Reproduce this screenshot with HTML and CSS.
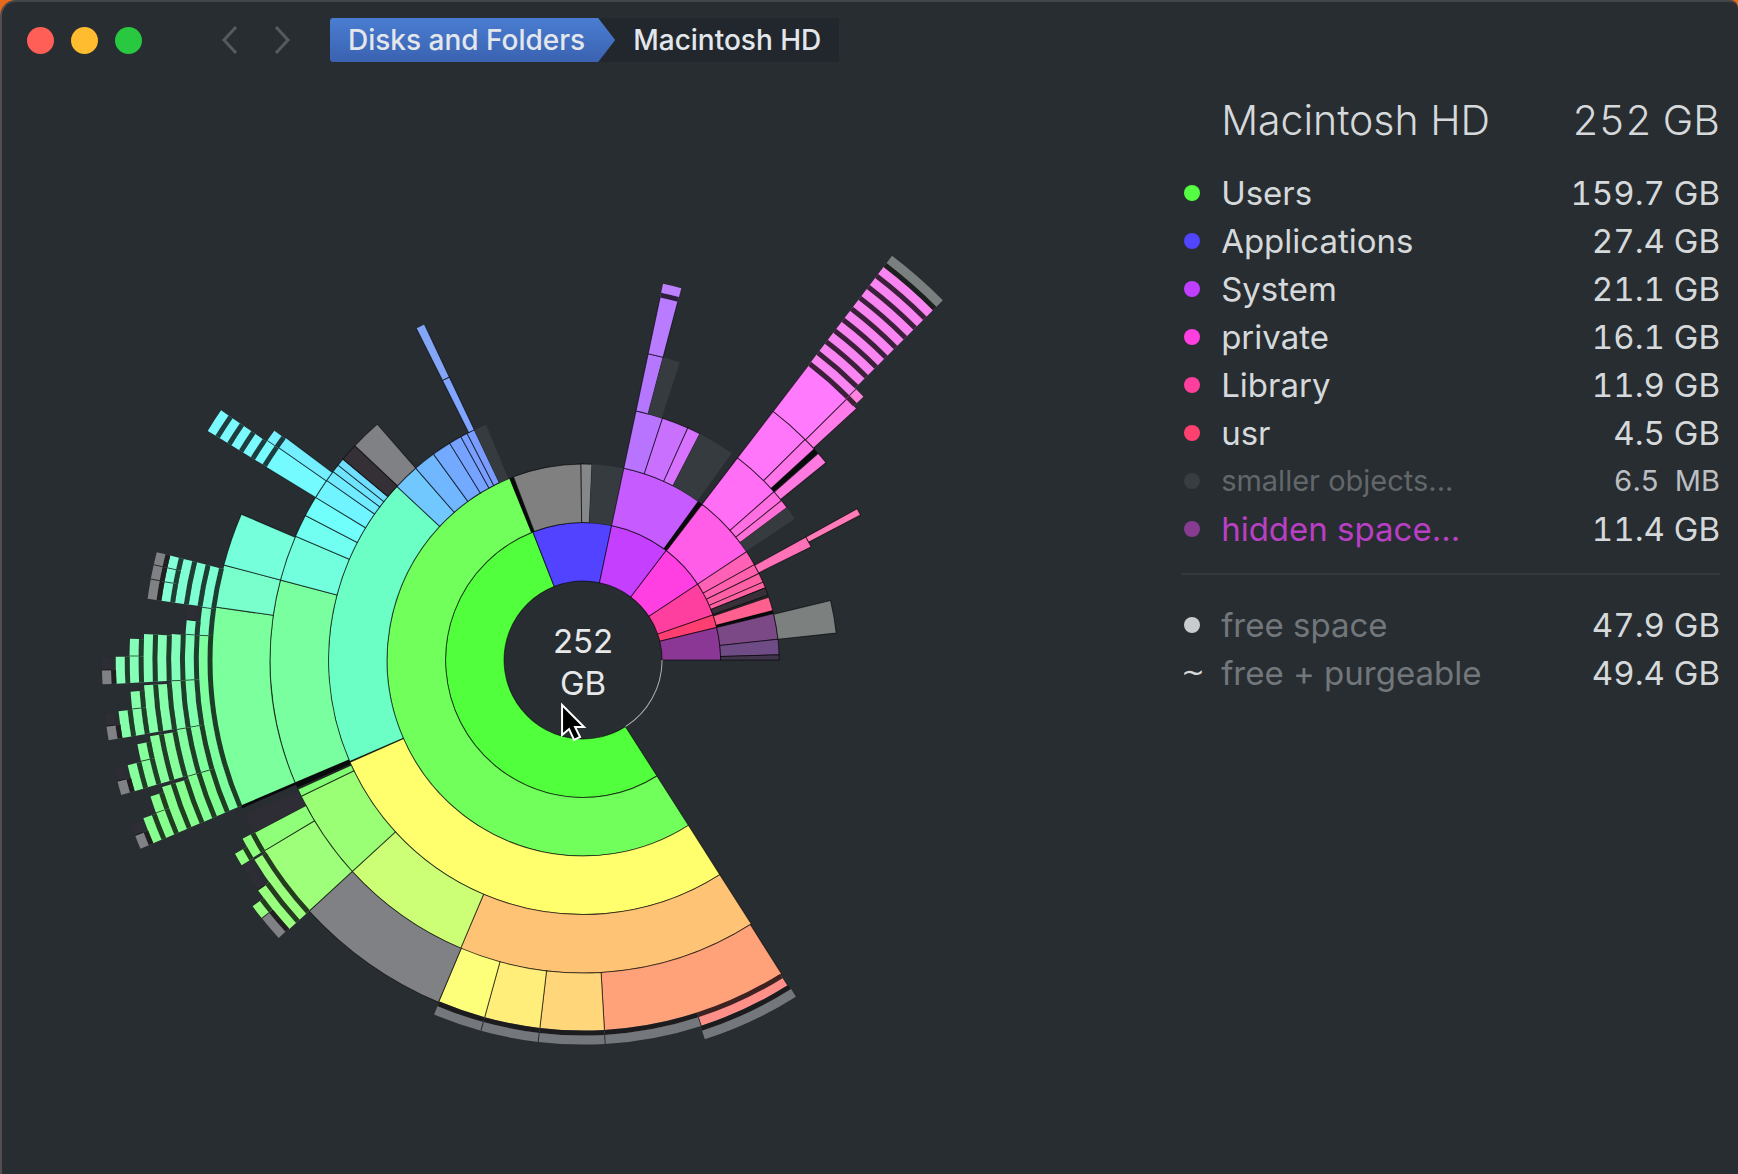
FILE: index.html
```
<!DOCTYPE html>
<html lang="en">

<head>
    <meta charset="UTF-8">
    <title>Macintosh HD</title>
    <link rel="stylesheet" href="styles.css">
</head>

<body>
    <div class="window">
        <header class="toolbar">
            <div class="lights">
                <button class="light close" aria-label="Close"></button>
                <button class="light minimize" aria-label="Minimize"></button>
                <button class="light maximize" aria-label="Maximize"></button>
            </div>
            <div class="arrows">
                <button class="arrow" aria-label="Back">
                    <svg width="16" height="28" viewBox="0 0 16 28"><path d="M14 1 L2 14 L14 27" /></svg>
                </button>
                <button class="arrow" aria-label="Forward">
                    <svg width="16" height="28" viewBox="0 0 16 28"><path d="M2 1 L14 14 L2 27" /></svg>
                </button>
            </div>
            <nav class="path">
                <a class="crumb root" href="#">Disks and Folders</a>
                <a class="crumb" href="#">Macintosh HD</a>
            </nav>
        </header>

        <main class="content">
            <svg class="chart" viewBox="-581 -581 1163 1094" role="img" aria-label="Disk usage">
                <g id="slices"></g>
                <path id="free-arc" class="free-arc" />
                <text class="total" x="0" y="-7">252</text>
                <text class="total" x="0" y="35">GB</text>
                <path class="cursor" d="M-21 45 V75 L-14 69 L-9 80 L-3 77 L-8 67 L1 67 Z" />
            </svg>

            <aside class="sidebar">
                <table class="list">
                    <thead>
                        <tr>
                            <td></td>
                            <th>Macintosh HD</th>
                            <th class="size">252 GB</th>
                        </tr>
                    </thead>
                    <tbody>
                        <tr>
                            <td><span class="dot users"></span></td>
                            <td>Users</td>
                            <td class="size">159.7 GB</td>
                        </tr>
                        <tr>
                            <td><span class="dot applications"></span></td>
                            <td>Applications</td>
                            <td class="size">27.4 GB</td>
                        </tr>
                        <tr>
                            <td><span class="dot system"></span></td>
                            <td>System</td>
                            <td class="size">21.1 GB</td>
                        </tr>
                        <tr>
                            <td><span class="dot private"></span></td>
                            <td>private</td>
                            <td class="size">16.1 GB</td>
                        </tr>
                        <tr>
                            <td><span class="dot library"></span></td>
                            <td>Library</td>
                            <td class="size">11.9 GB</td>
                        </tr>
                        <tr>
                            <td><span class="dot usr"></span></td>
                            <td>usr</td>
                            <td class="size">4.5 GB</td>
                        </tr>
                        <tr class="smaller">
                            <td><span class="dot"></span></td>
                            <td>smaller objects...</td>
                            <td class="size">6.5 &nbsp;MB</td>
                        </tr>
                        <tr class="hidden-space">
                            <td><span class="dot"></span></td>
                            <td>hidden space...</td>
                            <td class="size">11.4 GB</td>
                        </tr>
                    </tbody>
                </table>
                <hr>
                <table class="list free">
                    <tbody>
                        <tr>
                            <td><span class="dot"></span></td>
                            <td>free space</td>
                            <td class="size">47.9 GB</td>
                        </tr>
                        <tr>
                            <td><span class="tilde">~</span></td>
                            <td>free + purgeable</td>
                            <td class="size">49.4 GB</td>
                        </tr>
                    </tbody>
                </table>
            </aside>
        </main>
    </div>

    <script src="chart.js"></script>
</body>

</html>
```
FILE: styles.css
```
body {
    margin: 0;
    background: #e8681c;
    color: #d6d9db;
    font-family: Inter, "Liberation Sans", sans-serif;
}

.window {
    box-sizing: border-box;
    min-height: 100vh;
    display: flex;
    flex-direction: column;
    background: #282d31;
    border-top: 2px solid #41474b;
    border-left: 2px solid #584d4e;
    border-radius: 16px 8px 0 0;
}

/* Toolbar */
.toolbar {
    display: flex;
    align-items: center;
    height: 76px;
    padding-left: 25px;
}

.lights {
    display: flex;
    gap: 17px;
}

.light {
    width: 27px;
    height: 27px;
    padding: 0;
    border: none;
    border-radius: 50%;
}

.close {
    background: #ff5f57;
}

.minimize {
    background: #febc2e;
}

.maximize {
    background: #28c840;
}

.arrows {
    display: flex;
    gap: 36px;
    margin-left: 80px;
}

.arrow {
    display: flex;
    padding: 0;
    border: none;
    background: none;
}

.arrow path {
    fill: none;
    stroke: #555b5f;
    stroke-width: 3;
}

.path {
    display: flex;
    margin-left: 40px;
    background: #22272d;
    border-radius: 3px;
}

.crumb {
    padding: 0 18px;
    color: #e3e7ec;
    font-size: 28px;
    font-weight: 500;
    line-height: 44px;
    text-decoration: none;
}

.crumb.root {
    padding-right: 30px;
    background: linear-gradient(#4a7dd2, #3a62b0);
    border-radius: 3px;
    clip-path: polygon(0 0, calc(100% - 17px) 0, 100% 50%, calc(100% - 17px) 100%, 0 100%);
}

/* Content */
.content {
    flex: 1;
    display: flex;
}

.chart {
    flex: 1;
    min-width: 0;
}

.slice {
    stroke: rgba(0, 0, 0, 0.6);
    stroke-width: 1;
}

.shade {
    fill: rgba(0, 0, 0, 0.76);
}

.free-arc {
    fill: none;
    stroke: #aeb1b3;
    stroke-width: 1;
}

.total {
    fill: #e6e8ea;
    font-size: 33px;
    text-anchor: middle;
}

.cursor {
    fill: #000;
    stroke: #fff;
    stroke-width: 2;
}

.sidebar {
    box-sizing: border-box;
    width: 33%;
    padding: 11px 18px 0 16px;
}

.list {
    width: 100%;
    border-collapse: collapse;
    font-size: 33px;
}

.list td,
.list th {
    height: 48px;
    padding: 0;
    line-height: 48px;
    text-align: left;
    white-space: nowrap;
}

.list th {
    height: 62px;
    padding-bottom: 18px;
    font-size: 41px;
    font-weight: 300;
}

.list td:first-child {
    width: 40px;
}

.list .size {
    text-align: right;
    font-variant-numeric: tabular-nums;
}

.dot {
    display: block;
    width: 16px;
    height: 16px;
    margin-left: 3px;
    border-radius: 50%;
}

.users {
    background: #55ff42;
}

.applications {
    background: #5145ff;
}

.system {
    background: #c03fff;
}

.private {
    background: #ff3fe0;
}

.library {
    background: #ff3f9e;
}

.usr {
    background: #ff4170;
}

.smaller td {
    font-size: 29px;
    color: #62676b;
}

.smaller td.size {
    color: #bcbfc2;
}

.smaller .dot {
    background: #383d41;
}

.hidden-space td:nth-child(2) {
    color: #b93fc4;
}

.hidden-space .dot {
    background: #873c92;
}

hr {
    height: 2px;
    margin: 20px 0 26px;
    border: none;
    background: #33383c;
}

.free td:nth-child(2) {
    color: #72777b;
}

.free .dot {
    background: #c9ccce;
}

.tilde {
    display: block;
    font-family: "DejaVu Sans", sans-serif;
    font-size: 28px;
}
```
FILE: chart.js
```
const SVG = 'http://www.w3.org/2000/svg';
const group = document.getElementById('slices');

const HOLE = 79;        // radius of the empty centre
const RING = 58.5;      // width of a normal ring
const THIN = 9;         // width of a collapsed ring
const THIN_STEP = 13.8;

const GRAY = '#808184';
const DARK = '#353b3e';
const DUSK = '#2e2d36';

// rings 1-5 are full width, everything deeper is collapsed
function radii(level) {
    if (level <= 5) {
        return [HOLE + RING * (level - 1), HOLE + RING * level];
    }
    const inner = 375.5 + THIN_STEP * (level - 6);
    return [inner, inner + THIN];
}

// degrees run clockwise from the top
function point(r, deg) {
    const a = deg * Math.PI / 180;
    return (r * Math.sin(a)).toFixed(2) + ' ' + (-r * Math.cos(a)).toFixed(2);
}

function sector(r0, r1, from, to) {
    const large = to - from > 180 ? 1 : 0;
    return `M${point(r0, from)} L${point(r1, from)} A${r1} ${r1} 0 ${large} 1 ${point(r1, to)} ` +
        `L${point(r0, to)} A${r0} ${r0} 0 ${large} 0 ${point(r0, from)} Z`;
}

function draw(d, className, fill) {
    const path = document.createElementNS(SVG, 'path');
    path.setAttribute('d', d);
    if (className) path.setAttribute('class', className);
    if (fill) path.setAttribute('fill', fill);
    group.appendChild(path);
}

// parts: angle, color, angle, color, ... angle
function ring(level, ...parts) {
    const [r0, r1] = radii(level);
    for (let i = 0; i + 2 < parts.length; i += 2) {
        const from = parts[i];
        const color = parts[i + 1];
        const to = parts[i + 2];
        const faint = color === DARK || color === DUSK;
        if (level > 5 && !faint) {
            draw(sector(r0 - 5, r0, from, to), '', color);
            draw(sector(r0 - 5, r0, from, to), 'shade');
        }
        draw(sector(r0, r1, from, to), faint || level > 5 ? '' : 'slice', color);
        if (level > 5 && i > 0) {
            draw(`M${point(r0, from)} L${point(r1, from)}`, 'slice');
        }
    }
}

function shade(level, from, to) {
    const [r0, r1] = radii(level);
    draw(sector(r0, r1, from, to), 'shade');
}

// top level folders
ring(1, 147.5, '#52ff3d', 338.6, '#5143ff', 372, '#c53fff', 397.2, '#ff3fe2', 416.5,
    '#ff3f9f', 430.9, '#ff3f72', 436.3, '#8b3795', 450);

// Users
ring(2, 147.5, '#70ff5b', 338);
ring(3, 147.5, '#ffff6d', 246.5, '#6bffc5', 313, '#71c8ff', 318.9, '#71b7ff', 324, '#73aaff', 328.4,
    '#76a3ff', 331.3, '#789eff', 332.9, '#7a9cff', 334.7, DARK, 337.6);
ring(4, 147.5, '#ffc376', 203, '#ccff76', 227.5, '#9aff75', 244.2, '#82ff75', 245.6);
ring(4, 246.9, '#79ffa0', 284.8, '#72ffdd', 293.3, '#70fff0', 297.5, '#70fffa', 301.3, '#70f4ff', 305,
    '#70ebff', 307, '#70e4ff', 308.5, '#70deff', 309.9, '#343036', 313.2, GRAY, 318.9);
ring(4, 333.3, '#81a6ff', 334.7);
ring(5, 333.3, '#84a6f6', 334.7);
ring(5, 147.7, '#ffa27a', 176.7, '#ffd679', 186.7, '#ffef7a', 195.4, '#fdff7a', 202.9, GRAY, 227.5,
    '#9dff7a', 239.1, '#8fff7a', 242.3, DUSK, 245.3);
ring(5, 246.9, '#7cff9d', 278.2, '#78ffcb', 284.8, '#75ffdb', 293.1);
ring(5, 301.3, '#74fbff', 304.9, '#74efff', 306.8);
shade(3, 246.2, 246.5);
shade(4, 245.9, 246.9);
shade(5, 246.5, 246.9);
shade(2, 338, 339.1);

// collapsed rings at the bottom
ring(6, 147.9, '#ff8f89', 162.1, '#74777c', 176.7, '#74777c', 186.7, '#74777c', 195.4, '#74777c', 202.8);
ring(7, 147.7, '#74777c', 162.2);

ring(6, 227.5, '#9aff7d', 238.7);
ring(6, 239.1, '#8eff7d', 242.3);
ring(7, 227.5, '#99ff7f', 234.7, DUSK, 239);
ring(7, 239, '#8eff7f', 240.9);
ring(8, 227.6, GRAY, 231.2, '#96ff80', 233.3);

// collapsed rings on the left
ring(6, 246.9, '#7eff9f', 273.7, '#7dffc0', 277.9, '#7cffd2', 284.2);
ring(7, 246.9, '#80ff91', 253.6, '#80ff9f', 260.3, '#80ffae', 267.1, '#80ffbb', 273.7, '#7fffc6', 275.8, DUSK, 277.8);
ring(8, 246.9, '#83ff94', 253.6, '#83ffa1', 260.3, '#83ffaf', 267.1, '#83ffbb', 273.6);
ring(7, 278, '#7effd3', 284.2);
ring(8, 278, '#80ffd4', 284.2);
ring(9, 278, '#83ffd4', 280.6, '#83ffd7', 282.5, '#83ffda', 284.2);
ring(10, 278, GRAY, 280.6, GRAY, 282.5, GRAY, 284.2);

const fans = [
    [246.9, '#86ff8e'],
    [253.7, '#86ff9c'],
    [260.4, '#86ffaa'],
    [267.1, '#86ffb8']
];
for (const [start, color] of fans) {
    ring(9, start, color, start + 6.3);
    ring(10, start, color, start + 6.3);
    ring(11, start, color, start + 3.4, color, start + 5.6);
    ring(12, start, color, start + 3.3);
    ring(13, start, GRAY, start + 1.7, DUSK, start + 3.2);
}

ring(6, 301.4, '#77fbff', 304.8, '#77f1ff', 306.6);
for (let level = 7; level <= 10; level++) {
    ring(level, 301.4, '#7af9ff', 304.6);
}

// Applications
ring(2, 339.2, '#808080', 359.4, '#848888', 362.6, DARK, 372);

// System
ring(2, 372, '#c65bff', 396);
shade(2, 396, 397.4);
ring(3, 372, '#b874ff', 378.2, '#c970ff', 384.3, '#d873ff', 387.3, DARK, 395.7);
ring(4, 372, '#b677ff', 374.8, DARK, 378);
ring(5, 372, '#b97bff', 374.8);
ring(6, 372, '#be80ff', 374.8);

// private
ring(2, 397.4, '#ff5de8', 416.5);
ring(3, 397.4, '#ff6ef4', 408.6, '#ff6ee2', 411.2, '#ff6fd8', 413.2, DARK, 416.3);
ring(4, 397.4, '#ff76fb', 405.2, '#ff76eb', 407.6);
shade(4, 407.6, 408.6);
ring(4, 408.7, '#ff7ae0', 410.9);
ring(5, 397.4, '#ff7afd', 405.3, '#ff7be9', 407.4);
ring(6, 397.4, '#f985f3', 405.2, '#ff83df', 406.8);
for (let level = 7; level <= 14; level++) {
    ring(level, 397.4, '#f985f3', 405);
}
ring(15, 397.4, '#7a807f', 405);

// Library
ring(2, 416.5, '#ff61b6', 420.9, '#ff61ae', 423.8, '#ff61a6', 426.6, '#ff61a2', 428.4, '#373038', 430.7);
ring(3, 421.1, '#ff72b8', 423.6);
ring(4, 421.1, '#ff7cb8', 422.4);

// usr
ring(2, 431.3, '#ff6090', 435.4);
shade(2, 435.4, 436.3);

// hidden space
ring(2, 436.3, '#7b4a86', 443.9, '#6f4c86', 448.5, '#41354b', 450);
ring(3, 436.5, '#7c8180', 443.9);

document.getElementById('free-arc').setAttribute('d', `M${point(79, 90)} A79 79 0 0 1 ${point(79, 147.5)}`);
```
